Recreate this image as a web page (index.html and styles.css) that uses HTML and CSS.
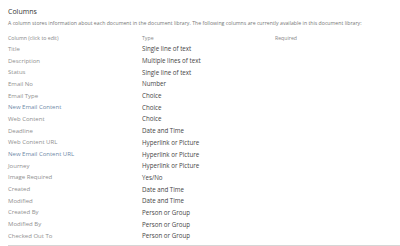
FILE: index.html
```html
<!DOCTYPE html>
<html>
<head>
<meta charset="utf-8">
<link rel="stylesheet" href="styles.css">
</head>
<body>
<div class="page">
  <h2 class="title">Columns</h2>
  <p class="desc">A column stores information about each document in the document library. The following columns are currently available in this document library:</p>
  <div class="table">
    <div class="row head"><span class="c1">Column (click to edit)</span><span class="c2">Type</span><span class="c3">Required</span></div>
    <div class="row"><span class="c1">Title</span><span class="c2">Single line of text</span><span class="c3"></span></div>
    <div class="row"><span class="c1">Description</span><span class="c2">Multiple lines of text</span><span class="c3"></span></div>
    <div class="row"><span class="c1">Status</span><span class="c2">Single line of text</span><span class="c3"></span></div>
    <div class="row"><span class="c1">Email No</span><span class="c2">Number</span><span class="c3"></span></div>
    <div class="row"><span class="c1">Email Type</span><span class="c2">Choice</span><span class="c3"></span></div>
    <div class="row"><span class="c1 link">New Email Content</span><span class="c2">Choice</span><span class="c3"></span></div>
    <div class="row"><span class="c1">Web Content</span><span class="c2">Choice</span><span class="c3"></span></div>
    <div class="row"><span class="c1">Deadline</span><span class="c2">Date and Time</span><span class="c3"></span></div>
    <div class="row"><span class="c1">Web Content URL</span><span class="c2">Hyperlink or Picture</span><span class="c3"></span></div>
    <div class="row"><span class="c1 link">New Email Content URL</span><span class="c2">Hyperlink or Picture</span><span class="c3"></span></div>
    <div class="row"><span class="c1">Journey</span><span class="c2">Hyperlink or Picture</span><span class="c3"></span></div>
    <div class="row"><span class="c1">Image Required</span><span class="c2">Yes/No</span><span class="c3"></span></div>
    <div class="row"><span class="c1">Created</span><span class="c2">Date and Time</span><span class="c3"></span></div>
    <div class="row"><span class="c1">Modified</span><span class="c2">Date and Time</span><span class="c3"></span></div>
    <div class="row"><span class="c1">Created By</span><span class="c2">Person or Group</span><span class="c3"></span></div>
    <div class="row"><span class="c1">Modified By</span><span class="c2">Person or Group</span><span class="c3"></span></div>
    <div class="row"><span class="c1">Checked Out To</span><span class="c2">Person or Group</span><span class="c3"></span></div>
  </div>
  <div class="rule"></div>
</div>
</body>
</html>
```
FILE: styles.css
```css
html, body {
  margin: 0;
  padding: 0;
  background: #ffffff;
}
body {
  font-family: "Open Sans", "Noto Sans", sans-serif;
  color: #444;
  width: 400px;
  height: 246px;
  overflow: hidden;
}
.page {
  padding: 7px 0 0 8px;
}
.title {
  margin: 0;
  font-size: 7px;
  font-weight: 400;
  color: #333;
  line-height: 10px;
}
.desc {
  margin: 1px 0 0 0;
  font-size: 5.2px;
  line-height: 10px;
  color: #777;
  white-space: nowrap;
}
.table {
  margin-top: 4px;
}
.row {
  display: grid;
  grid-template-columns: 134px 133px 1fr;
  height: 11.7px;
  align-items: center;
  font-size: 6px;
}
.row.head {
  font-size: 5.2px;
  color: #888;
  height: 11px;
}
.c1 {
  color: #909090;
  font-size: 6px;
}
.c1.link {
  color: #6f89a8;
}
.c2 {
  color: #454545;
  font-size: 6.2px;
}
.head .c1, .head .c2, .head .c3 {
  color: #888;
  font-size: 5.2px;
}
.rule {
  margin-top: 3px;
  height: 1px;
  background: #d6d6d6;
}
```
